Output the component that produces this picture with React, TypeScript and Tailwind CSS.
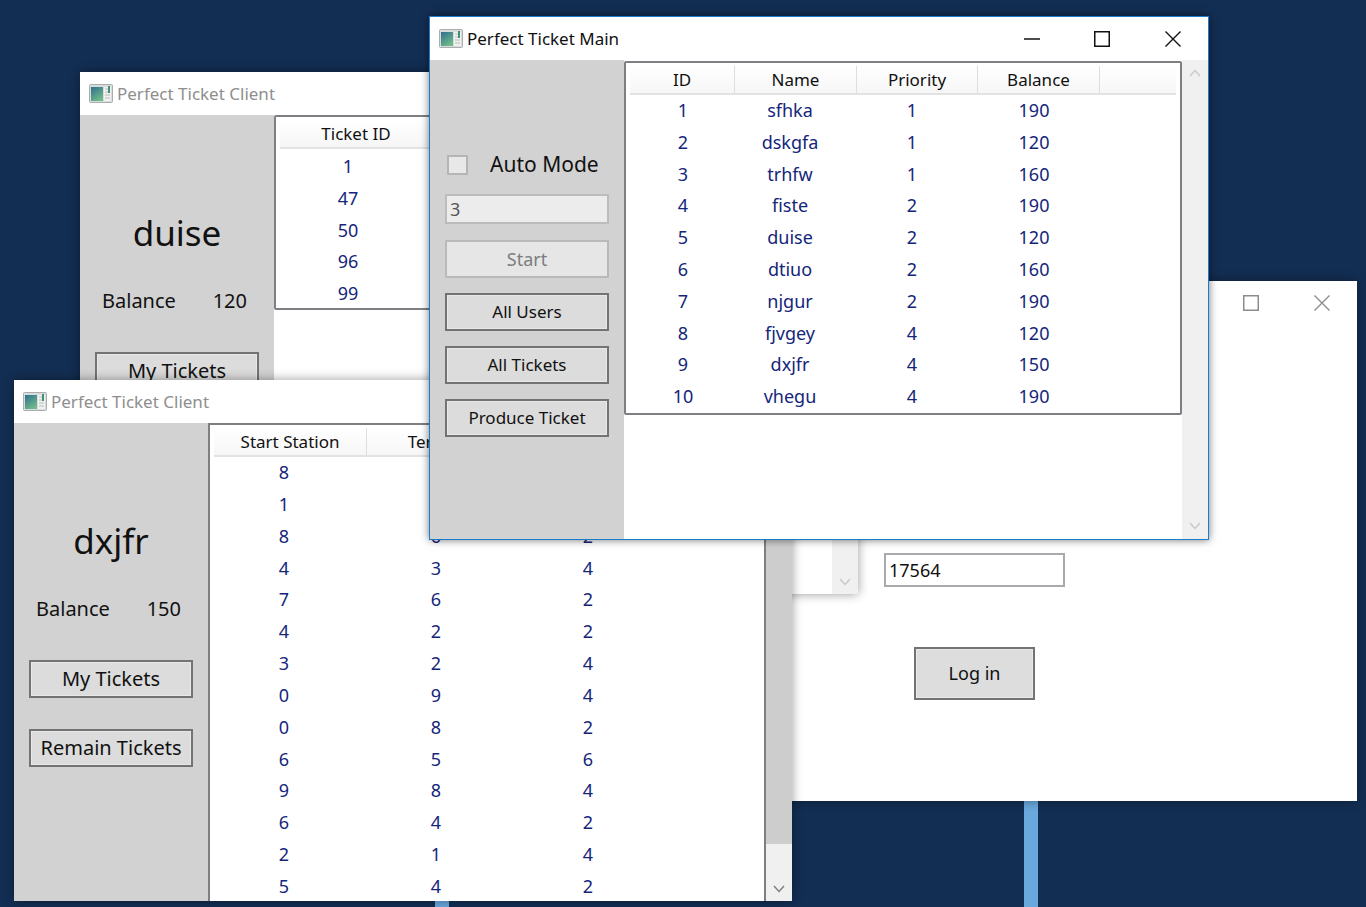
import { ReactNode } from 'react';

const font = '[font-family:"Noto_Sans","Open_Sans",sans-serif]';

function AppIcon() {
  return (
    <svg width="24" height="20" viewBox="0 0 24 20" className="shrink-0">
      <defs>
        <linearGradient id="appicon" x1="0" y1="0" x2="0.6" y2="1">
          <stop offset="0" stopColor="#2f6f8f" />
          <stop offset="1" stopColor="#6fb98a" />
        </linearGradient>
      </defs>
      <rect x="0.5" y="0.5" width="23" height="18" rx="1" fill="#d9dcdc" stroke="#a9adad" />
      <rect x="2" y="3" width="12" height="14" fill="url(#appicon)" />
      <rect x="15" y="3" width="7" height="14" fill="#f1f1ef" />
      <path d="M16 5h5M16 8h5M16 11h5M16 14h5" stroke="#b9bdbd" strokeWidth="1" />
      <rect x="19" y="2" width="2" height="7" fill="#3f8f7a" />
    </svg>
  );
}

function TitleButtons({ active, hideMin }: { active?: boolean; hideMin?: boolean }) {
  const color = active ? '#111111' : '#8c8c8c';
  return (
    <div className="ml-auto flex items-center">
      {!hideMin && (
        <div className="flex w-[70px] justify-center">
          <svg width="16" height="16" viewBox="0 0 16 16">
            <path d="M0 8h16" stroke={color} strokeWidth="1.5" />
          </svg>
        </div>
      )}
      <div className="flex w-[70px] justify-center">
        <svg width="16" height="16" viewBox="0 0 16 16">
          <rect x="0.75" y="0.75" width="14.5" height="14.5" fill="none" stroke={color} strokeWidth="1.5" />
        </svg>
      </div>
      <div className="flex w-[71px] justify-center">
        <svg width="16" height="16" viewBox="0 0 16 16">
          <path d="M0.5 0.5l15 15M15.5 0.5l-15 15" stroke={color} strokeWidth="1.4" fill="none" />
        </svg>
      </div>
    </div>
  );
}

function Window({
  title,
  active,
  className,
  children,
}: {
  title: string;
  active?: boolean;
  className: string;
  children: ReactNode;
}) {
  return (
    <div
      className={`absolute flex flex-col bg-white ${
        active
          ? 'border-[1.5px] border-[#1b7ccc] shadow-[0_0_8px_rgba(0,0,0,0.55)]'
          : 'shadow-[0_0_10px_rgba(0,0,0,0.4)]'
      } ${className}`}
    >
      <div className={`flex h-[43px] shrink-0 items-center pl-[9px] ${active ? '' : 'pt-[1px]'}`}>
        <AppIcon />
        <span className={`ml-[4px] text-[17px] ${active ? 'text-[#111111]' : 'text-[#8e8e8e]'}`}>{title}</span>
        <TitleButtons active={active} />
      </div>
      {children}
    </div>
  );
}

function Btn({ label, className = '', disabled }: { label: string; className?: string; disabled?: boolean }) {
  return (
    <div
      className={`mx-auto flex items-center justify-center ${
        disabled
          ? 'border-2 border-[#b9b9b9] bg-[#e6e6e6] text-[#7d7d7d]'
          : 'border-2 border-[#737373] bg-[#dcdcdc] text-[#111111] shadow-[inset_0_0_0_1px_#e8e8e8]'
      } ${className}`}
    >
      {label}
    </div>
  );
}

function ScrollBar({ children, className = '' }: { children?: ReactNode; className?: string }) {
  return <div className={`flex w-[26px] shrink-0 flex-col bg-[#f0f0f0] ${className}`}>{children}</div>;
}

function Chevron({ up, color = '#c9c9c9' }: { up?: boolean; color?: string }) {
  return (
    <svg width="12" height="8" viewBox="0 0 12 8" className="mx-auto">
      <path d={up ? 'M1 7l5-5.5L11 7' : 'M1 1l5 5.5L11 1'} fill="none" stroke={color} strokeWidth="1.4" />
    </svg>
  );
}

function ClientSidebar({ name, balance }: { name: string; balance: number }) {
  return (
    <div className="flex w-[194px] shrink-0 flex-col bg-[#d2d2d2] text-[#111111]">
      <div className="mt-[91px] text-center text-[35px] leading-[54px]">{name}</div>
      <div className="mt-[19px] flex h-[44px] items-center justify-between pl-[22px] pr-[27px] text-[20px]">
        <span>Balance</span>
        <span>{balance}</span>
      </div>
      <Btn label="My Tickets" className="mt-[29px] h-[38px] w-[164px] text-[20px]" />
      <Btn label="Remain Tickets" className="mt-[31px] h-[38px] w-[164px] text-[20px]" />
    </div>
  );
}

function TableHeader({ cols, template }: { cols: string[]; template: string }) {
  return (
    <div className={`mx-[4px] mt-[3px] grid h-[29px] shrink-0 border-b-2 border-[#e2e2e2] bg-gradient-to-b from-white to-[#f6f6f6] ${template}`}>
      {cols.map((c, i) => (
        <div key={i} className="flex items-center justify-center border-r border-[#dedede] text-[17px] text-[#111111] last:border-r-0">
          {c}
        </div>
      ))}
    </div>
  );
}

const users = [
  [1, 'sfhka', 1, 190],
  [2, 'dskgfa', 1, 120],
  [3, 'trhfw', 1, 160],
  [4, 'fiste', 2, 190],
  [5, 'duise', 2, 120],
  [6, 'dtiuo', 2, 160],
  [7, 'njgur', 2, 190],
  [8, 'fjvgey', 4, 120],
  [9, 'dxjfr', 4, 150],
  [10, 'vhegu', 4, 190],
];

const remain = [
  [8, 2, 4],
  [1, 3, 2],
  [8, 6, 2],
  [4, 3, 4],
  [7, 6, 2],
  [4, 2, 2],
  [3, 2, 4],
  [0, 9, 4],
  [0, 8, 2],
  [6, 5, 6],
  [9, 8, 4],
  [6, 4, 2],
  [2, 1, 4],
  [5, 4, 2],
];

export default function App() {
  return (
    <div className={`relative h-[907px] w-[1366px] overflow-hidden bg-[#132e53] ${font}`}>
      {/* taskbar strips poking out under the windows */}
      <div className="absolute bottom-0 left-[1024px] top-[790px] w-[14px] bg-[#69a9dd]" />
      <div className="absolute bottom-0 left-[435px] top-[890px] w-[14px] bg-[#69a9dd]" />

      {/* login window */}
      <Window title="Perfect Ticket Login" className="left-[579px] top-[281px] h-[520px] w-[778px]">
        <div className="ml-[305px] mt-[229px] flex h-[34px] w-[181px] items-center border-2 border-[#a9a9ae] pl-[3px] text-[18px] text-[#111111]">
          17564
        </div>
        <div className="ml-[335px] mt-[60px] flex h-[53px] w-[121px] items-center justify-center border-2 border-[#737373] bg-[#dddddd] text-[18px] text-[#111111] shadow-[inset_0_0_0_1px_#e8e8e8]">
          Log in
        </div>
      </Window>

      {/* client: duise */}
      <Window title="Perfect Ticket Client" className="left-[80px] top-[72px] h-[522px] w-[778px]">
        <div className="flex min-h-0 flex-1">
          <ClientSidebar name="duise" balance={120} />
          <div className="flex min-w-0 flex-1 flex-col">
            <div className="flex h-[195px] flex-col rounded-[2px] border-2 border-[#7d7f83]">
              <TableHeader cols={['Ticket ID']} template="grid-cols-[152px]" />
              <div className="flex flex-col pt-[2px]">
                {[1, 47, 50, 96, 99].map((n) => (
                  <div key={n} className="h-[31.8px] w-[152px] pl-[4px] pr-[12px] text-center text-[18px] leading-[31.8px] text-[#14267a]">
                    {n}
                  </div>
                ))}
              </div>
            </div>
          </div>
          <ScrollBar className="justify-end pb-[8px]">
            <Chevron />
          </ScrollBar>
        </div>
      </Window>

      {/* client: dxjfr */}
      <Window title="Perfect Ticket Client" className="left-[14px] top-[380px] h-[521px] w-[778px]">
        <div className="flex min-h-0 flex-1">
          <ClientSidebar name="dxjfr" balance={150} />
          <div className="flex min-w-0 flex-1 flex-col overflow-hidden border-2 border-b-0 border-[#7d7f83]">
            <TableHeader cols={['Start Station', 'Terminal', 'Price', '']} template="grid-cols-[153px_152px_152px_1fr]" />
            <div className="flex flex-col">
              {remain.map((row, i) => (
                <div key={i} className="ml-[4px] grid h-[31.85px] shrink-0 grid-cols-[152px_152px_152px] text-[18px] leading-[31.85px] text-[#14267a]">
                  {row.map((v, j) => (
                    <div key={j} className="pr-[12px] text-center">
                      {v}
                    </div>
                  ))}
                </div>
              ))}
            </div>
          </div>
          <ScrollBar className="relative">
            <div className="h-[421px] bg-[#cdcdcd]" />
            <div className="mt-auto pb-[8px]">
              <Chevron color="#7d7d7d" />
            </div>
          </ScrollBar>
        </div>
      </Window>

      {/* main */}
      <Window title="Perfect Ticket Main" active className="left-[429px] top-[16px] h-[524px] w-[780px]">
        <div className="flex min-h-0 flex-1">
          <div className="flex w-[194px] shrink-0 flex-col bg-[#d2d2d2]">
            <div className="ml-[17px] mt-[95px] flex h-[20px] items-center">
              <div className="h-[20px] w-[21px] rounded-[1px] border-2 border-[#b5b5b5] bg-[#e8e8e8]" />
              <span className="ml-[22px] text-[21px] text-[#111111]">Auto Mode</span>
            </div>
            <div className="mx-auto mt-[19px] flex h-[30px] w-[164px] items-center border-2 border-[#bcbcbc] bg-[#ececec] pl-[3px] text-[18px] text-[#555555]">
              3
            </div>
            <Btn label="Start" disabled className="mt-[16px] h-[38px] w-[164px] text-[18px]" />
            <Btn label="All Users" className="mt-[15px] h-[38px] w-[164px] text-[17px]" />
            <Btn label="All Tickets" className="mt-[15px] h-[38px] w-[164px] text-[17px]" />
            <Btn label="Produce Ticket" className="mt-[15px] h-[38px] w-[164px] text-[17px]" />
          </div>
          <div className="min-w-0 flex-1 pt-[1px]">
            <div className="flex h-[354px] flex-col rounded-[2px] border-2 border-[#7d7f83]">
              <TableHeader cols={['ID', 'Name', 'Priority', 'Balance', '']} template="grid-cols-[105px_122px_121px_122px_1fr]" />
              <div className="flex flex-col">
                {users.map((u) => (
                  <div key={u[0]} className="ml-[5px] grid h-[31.8px] grid-cols-[104px_122px_122px_122px] text-[18px] leading-[31.8px] text-[#14267a]">
                    <div className="text-center">{u[0]}</div>
                    <div className="pr-[12px] text-center">{u[1]}</div>
                    <div className="pr-[12px] text-center">{u[2]}</div>
                    <div className="pr-[12px] text-center">{u[3]}</div>
                  </div>
                ))}
              </div>
            </div>
          </div>
          <ScrollBar className="justify-between py-[9px]">
            <Chevron up />
            <Chevron />
          </ScrollBar>
        </div>
      </Window>
    </div>
  );
}
